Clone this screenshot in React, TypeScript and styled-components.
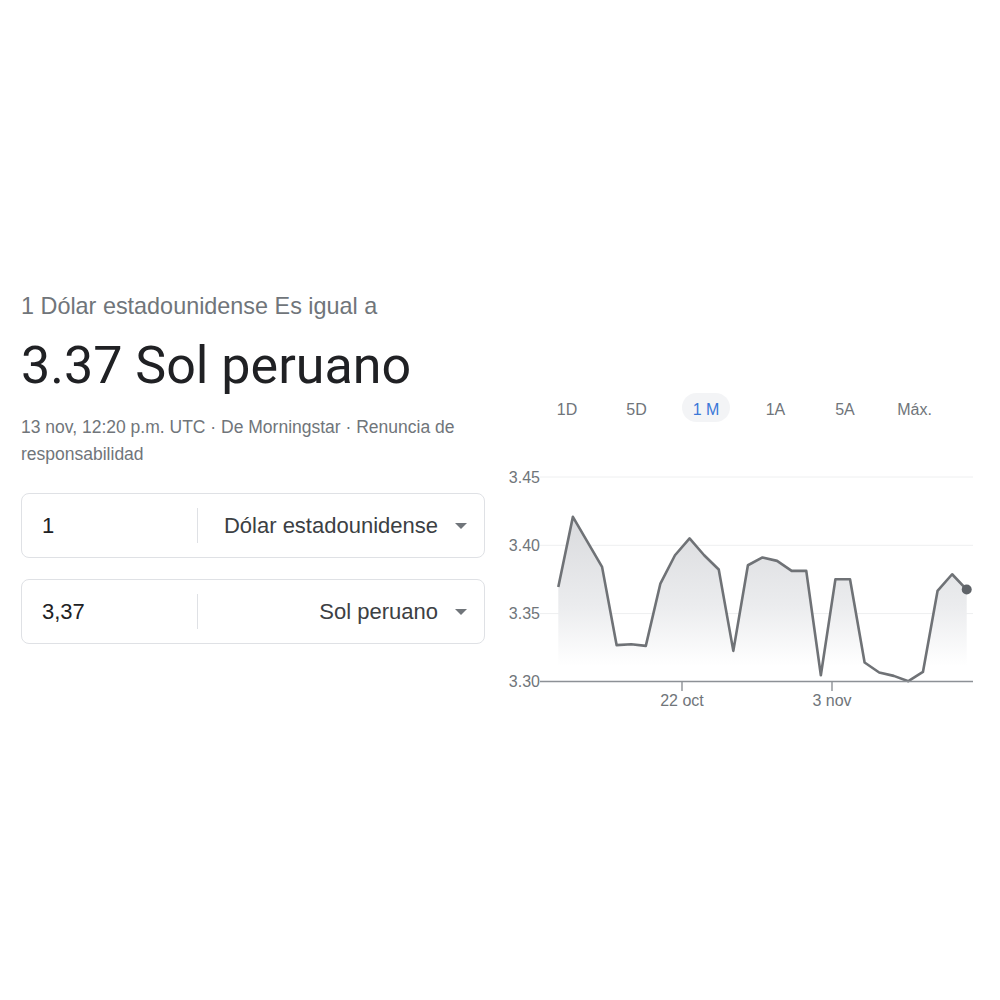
import styled, { createGlobalStyle } from "styled-components";

const GlobalStyle = createGlobalStyle`
  body {
    margin: 0;
    background: #fff;
    font-family: "Liberation Sans", Arial, sans-serif;
  }
`;

const prices = [
  3.3695, 3.4208, 3.4025, 3.3842, 3.3269, 3.3276, 3.3264, 3.372, 3.3927,
  3.405, 3.3927, 3.3823, 3.3227, 3.3854, 3.3911, 3.3886, 3.3813, 3.3813,
  3.3049, 3.3752, 3.3752, 3.3142, 3.3069, 3.3044, 3.3005, 3.3073, 3.3666,
  3.3788, 3.3676,
];

const ranges = ["1D", "5D", "1 M", "1A", "5A", "Máx."];

const yTicks = [3.45, 3.4, 3.35];

const xFor = (i: number) => 58.3 + i * 14.586;
const yFor = (p: number) => 17 + (3.45 - p) * 1366;

export default function App() {
  const line = prices.map((p, i) => `${xFor(i)},${yFor(p)}`).join(" ");
  const last = prices.length - 1;
  const area = `${xFor(0)},221 ${line} ${xFor(last)},221`;

  return (
    <>
      <GlobalStyle />
      <Page>
        <Converter>
          <Subtitle>1 Dólar estadounidense Es igual a</Subtitle>
          <Result>3.37 Sol peruano</Result>
          <Meta>
            13 nov, 12:20 p.m. UTC · De Morningstar · Renuncia de
            responsabilidad
          </Meta>

          <Fields>
            <Field>
              <Amount>1</Amount>
              <Divider />
              <Currency>
                Dólar estadounidense
                <Caret />
              </Currency>
            </Field>
            <Field>
              <Amount>3,37</Amount>
              <Divider />
              <Currency>
                Sol peruano
                <Caret />
              </Currency>
            </Field>
          </Fields>
        </Converter>

        <ChartPanel>
          <RangeTabs>
            {ranges.map((r) => (
              <RangeTab key={r} $active={r === "1 M"}>
                {r}
              </RangeTab>
            ))}
          </RangeTabs>

          <Chart width="475" height="260" viewBox="0 0 475 260">
            <defs>
              <linearGradient
                id="fade"
                gradientUnits="userSpaceOnUse"
                x1="0"
                y1="55"
                x2="0"
                y2="206"
              >
                <stop offset="0" stopColor="#d9dadd" />
                <stop offset="0.6" stopColor="#ebecee" />
                <stop offset="1" stopColor="#ffffff" />
              </linearGradient>
            </defs>

            {yTicks.map((t) => (
              <g key={t}>
                <line
                  x1="40"
                  x2="473"
                  y1={yFor(t)}
                  y2={yFor(t)}
                  stroke="#eeeff0"
                  strokeWidth="1"
                />
                <AxisText x="40" y={yFor(t) + 5.5} textAnchor="end">
                  {t.toFixed(2)}
                </AxisText>
              </g>
            ))}

            <polygon points={area} fill="url(#fade)" />
            <polyline
              points={line}
              fill="none"
              stroke="#6f7276"
              strokeWidth="2.6"
              strokeLinejoin="round"
            />

            <line x1="40" x2="473" y1="221.5" y2="221.5" stroke="#8d9196" strokeWidth="1.6" />
            <AxisText x="40" y="227" textAnchor="end">
              3.30
            </AxisText>

            <line x1="182" x2="182" y1="221.5" y2="231" stroke="#8d9196" strokeWidth="1.4" />
            <line x1="332" x2="332" y1="221.5" y2="231" stroke="#8d9196" strokeWidth="1.4" />
            <AxisText x="182" y="245.5" textAnchor="middle">
              22 oct
            </AxisText>
            <AxisText x="332" y="245.5" textAnchor="middle">
              3 nov
            </AxisText>

            <circle cx={xFor(last)} cy={yFor(prices[last])} r="5" fill="#5f6368" />
          </Chart>
        </ChartPanel>
      </Page>
    </>
  );
}

const Page = styled.div`
  display: flex;
  align-items: flex-start;
  gap: 15px;
  padding: 292px 0 0 21px;
`;

const Converter = styled.div`
  width: 464px;
  display: flex;
  flex-direction: column;
`;

const Subtitle = styled.div`
  font-size: 23.4px;
  line-height: 28px;
  color: #70757a;
`;

const Result = styled.div`
  margin-top: 16px;
  font-family: Roboto, "Liberation Sans", sans-serif;
  font-size: 52px;
  line-height: 60px;
  color: #202124;
`;

const Meta = styled.div`
  margin-top: 18px;
  font-size: 17.5px;
  line-height: 27px;
  color: #70757a;
  padding-right: 10px;
`;

const Fields = styled.div`
  margin-top: 25px;
  display: flex;
  flex-direction: column;
  gap: 21px;
`;

const Field = styled.div`
  height: 65px;
  box-sizing: border-box;
  border: 1px solid #dfe1e5;
  border-radius: 8px;
  display: flex;
  align-items: center;
`;

const Amount = styled.div`
  width: 175px;
  box-sizing: border-box;
  padding-left: 20px;
  font-size: 22px;
  color: #202124;
`;

const Divider = styled.div`
  width: 1px;
  height: 35px;
  background: #dfe1e5;
`;

const Currency = styled.div`
  flex: 1;
  display: flex;
  align-items: center;
  justify-content: flex-end;
  gap: 17px;
  padding-right: 17px;
  font-size: 22px;
  color: #3c4043;
`;

const Caret = styled.span`
  width: 0;
  height: 0;
  border-left: 6px solid transparent;
  border-right: 6px solid transparent;
  border-top: 6px solid #70757a;
`;

const ChartPanel = styled.div`
  width: 475px;
  display: flex;
  flex-direction: column;
`;

const RangeTabs = styled.div`
  margin: 101px 0 0 43px;
  display: flex;
  gap: 21.5px;
`;

const RangeTab = styled.div<{ $active?: boolean }>`
  width: 48px;
  height: 29px;
  box-sizing: border-box;
  padding-top: 4px;
  border-radius: 14.5px;
  display: flex;
  align-items: center;
  justify-content: center;
  font-size: 16px;
  color: ${(p) => (p.$active ? "#3b78d8" : "#70757a")};
  background: ${(p) => (p.$active ? "#f3f4f6" : "transparent")};
`;

const Chart = styled.svg`
  margin-top: 38px;
  display: block;
`;

const AxisText = styled.text`
  font-family: "Liberation Sans", Arial, sans-serif;
  font-size: 16px;
  fill: #70757a;
`;
